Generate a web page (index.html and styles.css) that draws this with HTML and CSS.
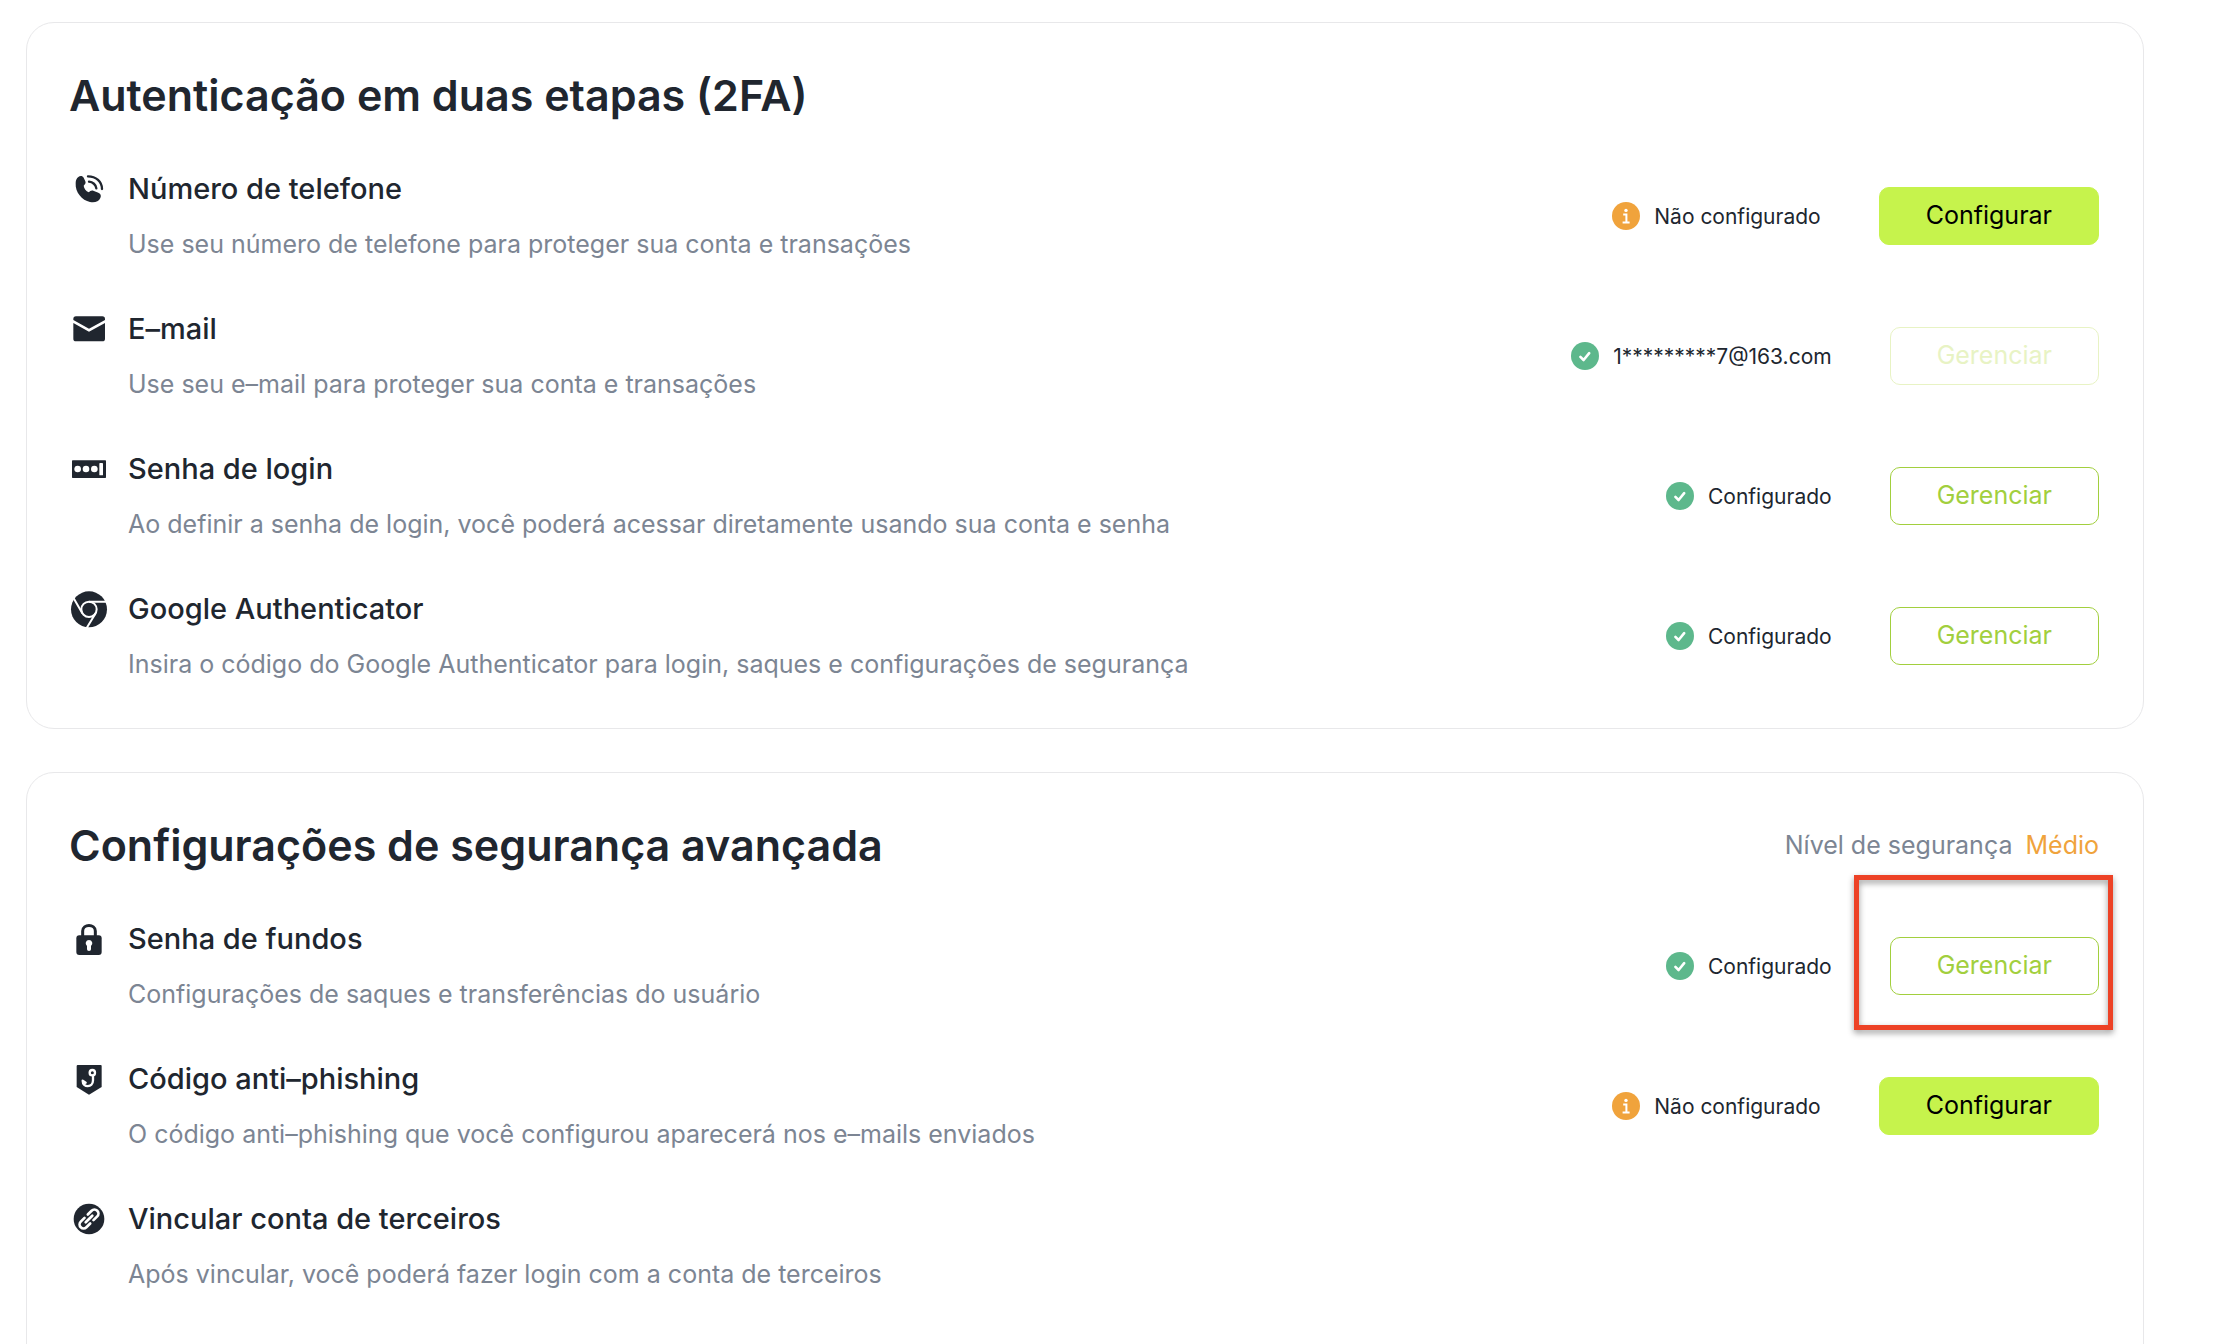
FILE: index.html
```html
<!DOCTYPE html>
<html lang="pt">
<head>
  <meta charset="utf-8">
  <meta name="viewport" content="width=device-width">
  <title>Segurança</title>
  <link rel="stylesheet" href="styles.css">
</head>
<body>
  <!-- shared status icons -->
  <svg class="symbols" aria-hidden="true">
    <symbol id="check" viewBox="0 0 28 28">
      <circle cx="14" cy="14" r="14" fill="#5db88c"/>
      <path d="M9.4 14.8l3.2 3.2 5.6-6.8" fill="none" stroke="#fff" stroke-width="2.6" stroke-linecap="round" stroke-linejoin="round"/>
    </symbol>
    <symbol id="info" viewBox="0 0 28 28">
      <circle cx="14" cy="14" r="14" fill="#f0a33c"/>
      <circle cx="14" cy="8.4" r="1.7" fill="#fff"/>
      <path d="M11.2 12.4h3.2v7.6M10.6 20.4h7" fill="none" stroke="#fff" stroke-width="2"/>
    </symbol>
  </svg>

  <main class="page">
    <section class="card">
      <div class="card-header">
        <h2>Autenticação em duas etapas (2FA)</h2>
      </div>
      <ul>
        <li>
          <svg class="icon" viewBox="27 27 120 120">
            <path d="M55 51c5-5 13-4 16 2l5 11c2 5 0 9-5 13 1 9 7 16 15 20 4-4 8-7 14-5l15 6c8 3 9 9 6 16-5 11-17 15-31 12C66 121 45 97 47 69c0-8 3-14 8-18z" fill="#20262f"/>
            <path d="M84 49c24 0 42 16 42 38M87 65c11 1 21 9 22 20" fill="none" stroke="#20262f" stroke-width="7" stroke-linecap="round"/>
          </svg>
          <div class="info">
            <h3>Número de telefone</h3>
            <p>Use seu número de telefone para proteger sua conta e transações</p>
          </div>
          <span class="status"><svg><use href="#info"/></svg>Não configurado</span>
          <button class="btn btn-fill">Configurar</button>
        </li>
        <li>
          <svg class="icon" viewBox="27 27 120 120">
            <path d="M48 49h79q8 0 8 8v3L87 86 40 60v-3q0-8 8-8zM40 69l47 26 48-26v47q0 8-8 8H48q-8 0-8-8z" fill="#20262f"/>
          </svg>
          <div class="info">
            <h3>E–mail</h3>
            <p>Use seu e–mail para proteger sua conta e transações</p>
          </div>
          <span class="status"><svg><use href="#check"/></svg>1*********7@163.com</span>
          <button class="btn" disabled>Gerenciar</button>
        </li>
        <li>
          <svg class="icon" viewBox="27 27 120 120">
            <rect x="36" y="61" width="102" height="53" rx="2" fill="#20262f"/>
            <g fill="#fff">
              <circle cx="53" cy="87" r="10"/>
              <circle cx="78" cy="87" r="10"/>
              <circle cx="103" cy="87" r="10"/>
              <rect x="118" y="69" width="11" height="37" rx="2"/>
            </g>
          </svg>
          <div class="info">
            <h3>Senha de login</h3>
            <p>Ao definir a senha de login, você poderá acessar diretamente usando sua conta e senha</p>
          </div>
          <span class="status"><svg><use href="#check"/></svg>Configurado</span>
          <button class="btn">Gerenciar</button>
        </li>
        <li>
          <svg class="icon" viewBox="27 27 120 120">
            <circle cx="87" cy="88" r="54" fill="#20262f"/>
            <g fill="none" stroke="#fff" stroke-width="6">
              <circle cx="87" cy="88" r="23"/>
              <path d="M87 65h51M67 100L41 55M107 100l-27 44"/>
            </g>
          </svg>
          <div class="info">
            <h3>Google Authenticator</h3>
            <p>Insira o código do Google Authenticator para login, saques e configurações de segurança</p>
          </div>
          <span class="status"><svg><use href="#check"/></svg>Configurado</span>
          <button class="btn">Gerenciar</button>
        </li>
      </ul>
    </section>

    <section class="card card-last">
      <div class="card-header">
        <h2>Configurações de segurança avançada</h2>
        <div class="level">Nível de segurança <span>Médio</span></div>
      </div>
      <ul>
        <li>
          <svg class="icon" viewBox="27 27 120 120">
            <path d="M68 80V63c0-22 38-22 38 0v17" fill="none" stroke="#20262f" stroke-width="9"/>
            <rect x="49" y="76" width="76" height="59" rx="9" fill="#20262f"/>
            <path d="M87 90a10 10 0 0 1 6 18v10q0 5-6 5t-6-5v-10a10 10 0 0 1 6-18z" fill="#fff"/>
          </svg>
          <div class="info">
            <h3>Senha de fundos</h3>
            <p>Configurações de saques e transferências do usuário</p>
          </div>
          <span class="status"><svg><use href="#check"/></svg>Configurado</span>
          <div class="marked">
            <button class="btn">Gerenciar</button>
          </div>
        </li>
        <li>
          <svg class="icon" viewBox="27 27 120 120">
            <path d="M53 45h69q3 0 3 3v63l-38 23-37-23V48q0-3 3-3z" fill="#20262f"/>
            <g fill="none" stroke="#fff" stroke-width="7" stroke-linecap="round" stroke-linejoin="round">
              <circle cx="97" cy="68" r="8"/>
              <path d="M99 77v14c0 23-31 23-31 1l9 6"/>
            </g>
          </svg>
          <div class="info">
            <h3>Código anti–phishing</h3>
            <p>O código anti–phishing que você configurou aparecerá nos e–mails enviados</p>
          </div>
          <span class="status"><svg><use href="#info"/></svg>Não configurado</span>
          <button class="btn btn-fill">Configurar</button>
        </li>
        <li>
          <svg class="icon" viewBox="27 27 120 120">
            <circle cx="87" cy="87" r="46" fill="#20262f"/>
            <g fill="none" stroke="#fff" stroke-width="8" stroke-linecap="round" transform="rotate(-45 87 87)">
              <path d="M80 75H64a12 12 0 0 0 0 24h16M94 75h16a12 12 0 0 1 0 24H94M73 87h28"/>
            </g>
          </svg>
          <div class="info">
            <h3>Vincular conta de terceiros</h3>
            <p>Após vincular, você poderá fazer login com a conta de terceiros</p>
          </div>
        </li>
      </ul>
    </section>
  </main>
</body>
</html>
```
FILE: styles.css
```css
*{
  box-sizing:border-box;
}
body{
  margin:0;
  height:100vh;
  overflow:hidden;
  background-color:#fff;
  color:#20262f;
  font-family:Inter, "Liberation Sans", sans-serif;
}
h2, h3, p, ul{
  margin:0;
  padding:0;
}
.symbols{
  display:none;
}
.page{
  display:flex;
  flex-direction:column;
  gap:43px;
  padding:22px 92px 0 26px;
}
.card{
  border:1px solid #e8e8ea;
  border-radius:28px;
  padding:42px 44px 45px 42px;
}
.card-last{
  padding-bottom:88px;
}
.card-header{
  display:flex;
  align-items:center;
  justify-content:space-between;
  margin-bottom:44px;
}
h2{
  font-size:43px;
  line-height:60px;
  font-weight:600;
}
.level{
  color:#7c8593;
  font-size:25px;
  line-height:36px;
}
.level span{
  margin-left:6px;
  color:#f0a33c;
}
ul{
  list-style:none;
  display:flex;
  flex-direction:column;
  gap:46px;
}
li{
  display:flex;
  align-items:center;
}
.icon{
  align-self:flex-start;
  flex:none;
  width:40px;
  height:40px;
  margin-right:19px;
}
.info{
  flex:1;
}
h3{
  font-size:29px;
  line-height:40px;
  font-weight:500;
}
p{
  margin-top:18px;
  padding-bottom:2px;
  color:#7c8593;
  font-size:25px;
  line-height:34px;
}
.status{
  display:flex;
  align-items:center;
  gap:14px;
  margin-right:58px;
  font-size:21px;
}
.status svg{
  width:28px;
  height:28px;
}
.btn{
  height:58px;
  padding:0 46px 2px;
  border:1px solid #a2cf3e;
  border-radius:10px;
  background-color:#fff;
  color:#a2cf3e;
  font-family:inherit;
  font-size:25px;
  cursor:pointer;
}
.btn:disabled{
  border-color:#e8f3c4;
  color:#e8f3c4;
  cursor:default;
}
.btn-fill{
  border-color:#c6f34c;
  background-color:#c6f34c;
  color:#000;
}
/* red frame round the button */
.marked{
  position:relative;
}
.marked::after{
  content:"";
  position:absolute;
  top:-62px;
  right:-14px;
  bottom:-35px;
  left:-36px;
  border:5px solid #ed4226;
  filter:drop-shadow(0 3px 3px rgba(0,0,0,0.4));
  pointer-events:none;
}
```
